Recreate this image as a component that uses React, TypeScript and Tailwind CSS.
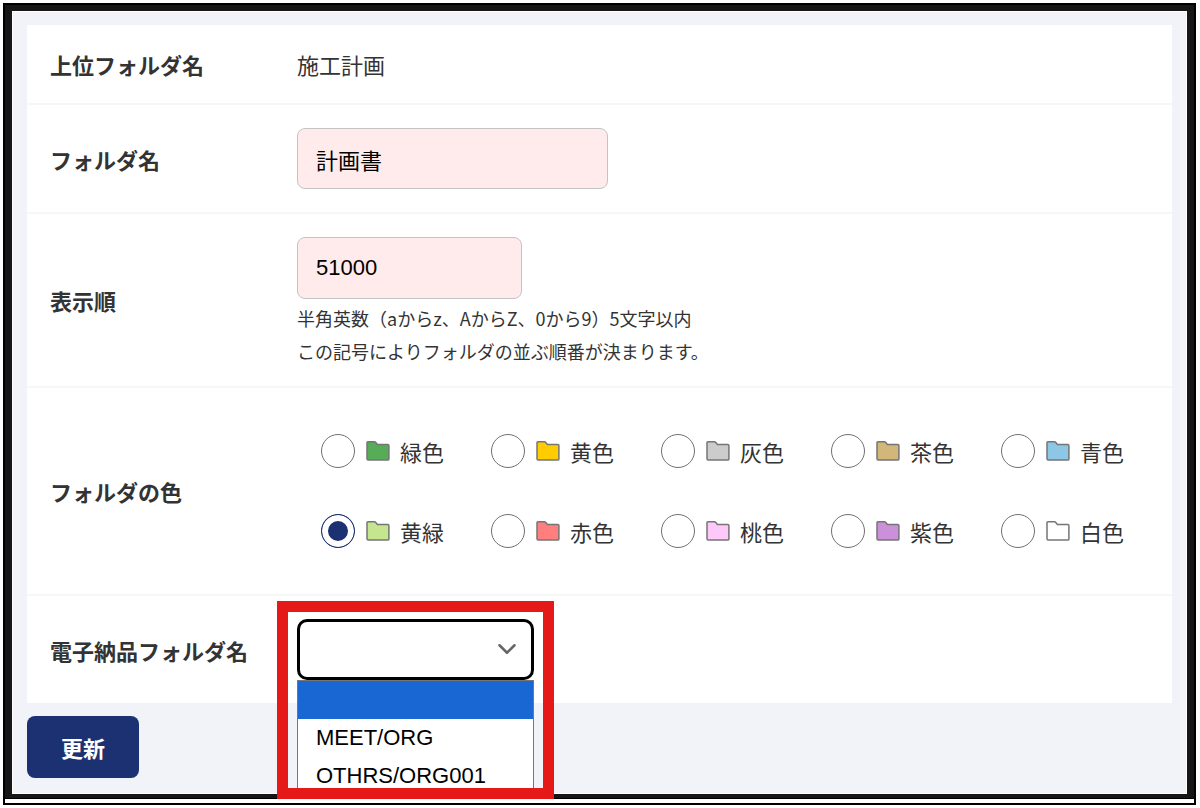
import React, { useState } from "react";
import { ChevronDown } from "lucide-react";

const COLORS = [
  { id: "green", label: "緑色", fill: "#57ad57" },
  { id: "yellow", label: "黄色", fill: "#ffcc00" },
  { id: "gray", label: "灰色", fill: "#cccccc" },
  { id: "brown", label: "茶色", fill: "#d2b67a" },
  { id: "blue", label: "青色", fill: "#8ec6e6" },
  { id: "lime", label: "黄緑", fill: "#c5e58f" },
  { id: "red", label: "赤色", fill: "#ff7f7f" },
  { id: "pink", label: "桃色", fill: "#ffc8fa" },
  { id: "purple", label: "紫色", fill: "#cc8fda" },
  { id: "white", label: "白色", fill: "#ffffff" },
];

const OPTIONS = ["", "MEET/ORG", "OTHRS/ORG001"];

function FolderIcon({ fill }: { fill: string }) {
  return (
    <svg width="24" height="20" viewBox="0 0 24 20" aria-hidden="true">
      <path
        d="M1 1.8Q1 .8 2 .8H8.4Q9.2 .8 9.8 1.5L11.4 3.4H21.8Q22.9 3.4 22.9 4.5V17.9Q22.9 19 21.8 19H2.2Q1 19 1 17.8Z"
        fill={fill}
        stroke="#757575"
        strokeWidth="1.5"
        strokeLinejoin="round"
      />
    </svg>
  );
}

function Row({ label, htmlFor, children }: { label: string; htmlFor?: string; children: React.ReactNode }) {
  return (
    <div className="flex items-center border-b-2 border-[#f6f6f8] py-[23px] pl-[23px] last:border-b-0">
      <div className="w-[247px] shrink-0 font-bold">
        {htmlFor ? <label htmlFor={htmlFor}>{label}</label> : <span>{label}</span>}
      </div>
      <div className="min-w-0 flex-1">{children}</div>
    </div>
  );
}

export default function App() {
  const [name, setName] = useState("計画書");
  const [order, setOrder] = useState("51000");
  const [color, setColor] = useState("lime");
  const [folder, setFolder] = useState("");

  return (
    <div className="bg-white pt-[3px] pr-1 pb-1 pl-[3px] font-['Noto_Sans_CJK_JP',sans-serif] text-[22px] leading-8 text-[#333333]">
      <div className="border-2 border-black pb-1">
        <div className="border-b border-black bg-[#161616] px-[7px] pt-1.5 pb-1">
          <form
            onSubmit={(e) => e.preventDefault()}
            className="border border-white bg-[#f2f3f8] px-3.5 pt-[13px] pb-[15px]"
          >
            <div className="bg-white">
              <Row label="上位フォルダ名">施工計画</Row>

              <Row label="フォルダ名" htmlFor="name">
                <input
                  id="name"
                  type="text"
                  value={name}
                  onChange={(e) => setName(e.target.value)}
                  className="block h-[61px] w-[311px] rounded-lg border border-[#c4c4c4] bg-[#ffebeb] px-[18px] font-['Liberation_Sans','Noto_Sans_CJK_JP',sans-serif] text-black"
                />
              </Row>

              <Row label="表示順" htmlFor="order">
                <input
                  id="order"
                  type="text"
                  value={order}
                  onChange={(e) => setOrder(e.target.value)}
                  className="block h-[62px] w-[225px] rounded-lg border border-[#c4c4c4] bg-[#ffebeb] px-[18px] font-['Liberation_Sans','Noto_Sans_CJK_JP',sans-serif] text-black"
                />
                <p className="mt-[3px] -mb-[5px] text-lg leading-[33px]">
                  半角英数（aからz、AからZ、0から9）5文字以内
                  <br />
                  この記号によりフォルダの並ぶ順番が決まります。
                </p>
              </Row>

              <Row label="フォルダの色">
                <div role="radiogroup" aria-label="フォルダの色" className="grid grid-cols-[repeat(5,170px)] pl-6">
                  {COLORS.map((c) => (
                    <label key={c.id} className="flex h-20 cursor-pointer items-center">
                      <input
                        type="radio"
                        name="color"
                        checked={color === c.id}
                        onChange={() => setColor(c.id)}
                        className="mr-[11px] size-[34px] appearance-none rounded-full border border-[#707070] bg-white checked:border-[#1c3172] checked:bg-[#1c3172] checked:shadow-[inset_0_0_0_6px_#ffffff]"
                      />
                      <FolderIcon fill={c.fill} />
                      <span className="ml-2.5">{c.label}</span>
                    </label>
                  ))}
                </div>
              </Row>

              <Row label="電子納品フォルダ名" htmlFor="folder">
                <div className="relative w-[237px]">
                  <select
                    id="folder"
                    value={folder}
                    onChange={(e) => setFolder(e.target.value)}
                    className="block h-[61px] w-full appearance-none rounded-[10px] border-3 border-black bg-white px-4 font-['Liberation_Sans',sans-serif] text-black"
                  >
                    {OPTIONS.map((o) => (
                      <option key={o} value={o}>
                        {o}
                      </option>
                    ))}
                  </select>
                  <ChevronDown
                    size={30}
                    strokeWidth={2}
                    className="pointer-events-none absolute top-[15px] right-3 text-[#666666]"
                  />

                  {/* Opened list */}
                  <ul
                    role="listbox"
                    aria-label="電子納品フォルダ名"
                    className="absolute top-[61px] left-0 z-10 w-full border border-b-0 border-[#767676] bg-white font-['Liberation_Sans',sans-serif] text-black"
                  >
                    {OPTIONS.map((o) => (
                      <li
                        key={o}
                        role="option"
                        aria-selected={o === folder}
                        onClick={() => setFolder(o)}
                        className="flex h-[38px] cursor-default items-center px-[18px] aria-selected:bg-[#1967d2] aria-selected:text-white"
                      >
                        {o}
                      </li>
                    ))}
                  </ul>

                  {/* Highlight frame */}
                  <div className="pointer-events-none absolute -top-[18px] -left-5 z-20 h-[198px] w-[277px] border-11 border-[#e61919]" />
                </div>
              </Row>
            </div>

            <button
              type="submit"
              className="mt-[13px] block h-[62px] w-28 cursor-pointer rounded-lg bg-[#1c3172] font-bold text-white"
            >
              更新
            </button>
          </form>
        </div>
      </div>
    </div>
  );
}
